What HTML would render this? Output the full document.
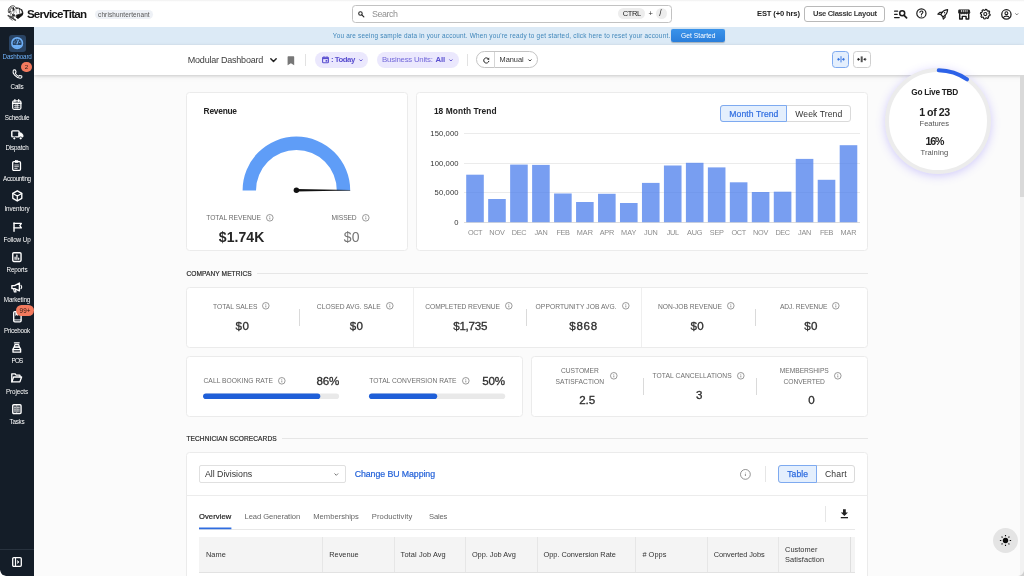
<!DOCTYPE html>
<html><head><meta charset="utf-8">
<style>
*{box-sizing:border-box;margin:0;padding:0}
html,body{width:1024px;height:576px;overflow:hidden;background:#fbfbfb;font-family:"Liberation Sans",sans-serif;color:#222}
.a{position:absolute}
.t{position:absolute;white-space:nowrap;line-height:1}
#root{position:absolute;left:0;top:0;width:1024px;height:576px;overflow:hidden;will-change:transform}
svg{position:absolute;overflow:visible}
</style></head><body><div id="root">
<div class="a" style="left:0px;top:0px;width:1024px;height:27px;background:#fff;"></div>
<div class="a" style="left:0px;top:0px;width:1024px;height:2px;background:linear-gradient(#efefef,#fbfbfb 60%,#fff);"></div>
<div class="a" style="left:34px;top:27px;width:990px;height:18px;background:#dceaf6;"></div>
<div class="a" style="left:34px;top:45px;width:990px;height:29.5px;background:#fff;box-shadow:0 1px 3px rgba(0,0,0,.16),0 2px 6px rgba(0,0,0,.06)"></div>
<div class="a" style="left:1020px;top:75px;width:4px;height:501px;background:#f2f2f2;"></div>
<div class="a" style="left:1020px;top:75px;width:4px;height:122px;background:#d9d9d9;"></div>
<svg style="left:4px;top:2px" width="24" height="22" viewBox="0 0 24 22" fill="none" stroke="#111" stroke-linecap="round" stroke-linejoin="round">
<path d="M4.5 10.4C3.7 7.4 5.2 4.6 8 3.9C9.6 3.5 10.8 4.1 11.4 5.2" stroke-width="1" opacity=".7"/>
<path d="M5.2 9.6C6 8.6 6.2 7.2 7.2 6.4M6.2 11.6C7 10 8.4 9.6 8.8 8.4M6.8 5.2C8 5.6 8.6 6.4 8.8 7.4M4.8 8C5.6 7.6 5.8 6.2 6.6 5.6" stroke-width=".9" opacity=".6"/>
<path d="M5.4 10.4L6.4 9.2" stroke-width="1.3" opacity=".8"/>
<path d="M9.2 5.8L10 7.9" stroke-width="1.5" opacity=".95"/>
<path d="M9.6 8.4C10.4 9.6 10.2 11 9 12M7.4 11.4L8.6 12.4" stroke-width=".8" opacity=".6"/>
<path d="M11.8 5.7C13.4 5.5 15.4 6.1 17.2 7.5" stroke-width=".9" opacity=".75"/>
<path d="M12.2 6.2L13.4 6.6M15 6.4L16.2 7.6" stroke-width="1.1" opacity=".8"/>
<path d="M17.6 7.8C18.3 9 18.7 10.4 18.6 11.8" stroke-width="1.4" opacity=".9"/>
<path d="M15.3 7.4L15.7 11.2" stroke-width=".9" opacity=".6"/>
<path d="M12.2 6.4C11.6 8 11.8 9.6 12.6 11" stroke-width=".7" opacity=".45"/>
<path d="M12.4 13.2L18.6 11.4L18.4 13.2L14 16.6L12.4 15.4Z" fill="#111" stroke-width=".8"/>
<path d="M8.4 12.6H10.6V14.2H8.4Z" fill="#111" stroke-width=".7" opacity=".9"/>
<path d="M6.6 12.4C7 13.6 7 14.4 6.6 15.2" stroke-width=".7" opacity=".55"/>
<path d="M4.2 13.6L11.4 18.2" stroke-width="1.5" opacity=".8"/>
<path d="M5.2 15.8L8.2 18.2M7.4 14.4L9.6 15.6" stroke-width="1" opacity=".6"/>
</svg>
<div class="t" style="left:26.90px;top:8px;font-size:11.6px;font-weight:700;color:#151515;letter-spacing:-0.787px;">ServiceTitan</div>
<div class="a" style="left:95px;top:9.8px;width:58px;height:9.3px;background:#eef1f6;border-radius:5px"></div>
<div class="t" style="left:98.10px;top:12px;font-size:6.4px;font-weight:400;color:#555;letter-spacing:0.136px;">chrishuntertenant</div>
<div class="a" style="left:352px;top:5px;width:320px;height:17.6px;background:#fff;border:1px solid #c2c2c2;border-radius:3.5px"></div>
<svg style="left:357.8px;top:10.6px" width="6.4" height="6.4" viewBox="0 0 12 12"><circle cx="4.6" cy="4.6" r="3.3" fill="none" stroke="#222" stroke-width="2"/><path d="M7.2 7.2L11 11" stroke="#222" stroke-width="2.2" stroke-linecap="round"/></svg>
<div class="t" style="left:371.90px;top:10px;font-size:8.9px;font-weight:400;color:#8f8f8f;letter-spacing:-0.404px;">Search</div>
<div class="a" style="left:618.3px;top:7.8px;width:26.6px;height:11.7px;background:#ededed;border-radius:6px"></div>
<div class="t" style="left:622.70px;top:10px;font-size:7.5px;font-weight:400;color:#222;letter-spacing:-0.373px;">CTRL</div>
<div class="t" style="left:648.60px;top:10px;font-size:7.5px;font-weight:400;color:#333;letter-spacing:-0.191px;">+</div>
<div class="a" style="left:655.7px;top:7.8px;width:10.9px;height:11.7px;background:#ededed;border-radius:6px"></div>
<div class="t" style="left:659.30px;top:9px;font-size:8.6px;font-weight:400;color:#222;letter-spacing:1.309px;">/</div>
<div class="t" style="left:757.00px;top:10px;font-size:7.6px;font-weight:700;color:#222;letter-spacing:-0.144px;">EST (+0 hrs)</div>
<div class="a" style="left:804.2px;top:5.9px;width:80.8px;height:15.7px;background:#fff;border:1px solid #b9b9b9;border-radius:3px"></div>
<div class="t" style="left:813.00px;top:10px;font-size:7.6px;font-weight:700;color:#3a3a3a;letter-spacing:-0.330px;">Use Classic Layout</div>
<svg style="left:893.5px;top:9.5px" width="13.5" height="8.6" viewBox="0 0 13.5 8.6" fill="none" stroke="#1c1c1c" stroke-width="1.35" stroke-linecap="round" stroke-linejoin="round">
<path d="M0.6 1.2H3.6M0.6 4.3H3.2M0.6 7.6H5.2" stroke-width="1.3"/><circle cx="8.2" cy="3.3" r="2.5" stroke-width="1.5"/><path d="M10.1 5.3L12.6 7.9" stroke-width="1.7"/></svg>
<svg style="left:916.2px;top:8.4px" width="10.8" height="10.8" viewBox="0 0 10.8 10.8" fill="none" stroke="#1c1c1c" stroke-width="1.35" stroke-linecap="round" stroke-linejoin="round">
<circle cx="5.4" cy="5.4" r="4.6" stroke-width="1.2"/><path d="M3.9 4.3C3.9 2.5 6.9 2.5 6.9 4.3C6.9 5.3 5.4 5.4 5.4 6.6" stroke-width="1.1"/><circle cx="5.4" cy="8.1" r=".65" fill="#1c1c1c" stroke="none"/></svg>
<svg style="left:937px;top:9px" width="11.4" height="10.8" viewBox="0 0 11.4 10.8" fill="none" stroke="#1c1c1c" stroke-width="1.35" stroke-linecap="round" stroke-linejoin="round">
<path d="M10.6 0.7C7.4 0.9 5 2.9 3.8 5.6L5.9 7.7C8.6 6.5 10.4 4 10.6 0.7Z" stroke-width="1.25"/><path d="M3.9 5.5L0.8 5.1L3 3.2L5 3.4M5.9 7.6L6.3 10.2L8.2 8.2L8 6.1" stroke-width="1.15"/><circle cx="7.6" cy="3.8" r=".7" fill="#1c1c1c" stroke="none"/></svg>
<svg style="left:958.3px;top:8.7px" width="12.4" height="10.8" viewBox="0 0 12.4 10.8" fill="none" stroke="#1c1c1c" stroke-width="1.35" stroke-linecap="round" stroke-linejoin="round">
<path d="M1.2 0.9H11.2L11.8 3.4C11.8 5.3 9.4 5.3 9.4 3.6C9.4 5.3 7.2 5.3 7.2 3.6C7.2 5.3 5 5.3 5 3.6C5 5.3 2.8 5.3 2.8 3.6C2.8 5.3 0.6 5.3 0.6 3.4Z" fill="#1c1c1c" stroke-width=".9"/>
<path d="M3.4 1.4V2.8M5.3 1.4V2.8M7.2 1.4V2.8M9.1 1.4V2.8" stroke="#fff" stroke-width=".8"/>
<path d="M1.7 5.6V10H4.3V7.4H8.1V10H10.7V5.6" stroke-width="1.45"/></svg>
<svg style="left:980.2px;top:8.6px" width="10.6" height="10.2" viewBox="0 0 10.6 10.2" fill="none" stroke="#1c1c1c" stroke-width="1.35" stroke-linecap="round" stroke-linejoin="round">
<path d="M10.19 5.42L9.94 6.67L8.80 6.83L8.23 7.67L8.53 8.79L7.47 9.49L6.55 8.79L5.56 8.99L4.98 9.99L3.73 9.74L3.57 8.60L2.73 8.03L1.61 8.33L0.91 7.27L1.61 6.35L1.41 5.36L0.41 4.78L0.66 3.53L1.80 3.37L2.37 2.53L2.07 1.41L3.13 0.71L4.05 1.41L5.04 1.21L5.62 0.21L6.87 0.46L7.03 1.60L7.87 2.17L8.99 1.87L9.69 2.93L8.99 3.85L9.19 4.84Z" stroke-width="1.15"/><circle cx="5.3" cy="5.1" r="1.55" stroke-width="1.1"/></svg>
<svg style="left:1001.4px;top:8.6px" width="10.8" height="10.8" viewBox="0 0 10.8 10.8" fill="none" stroke="#1c1c1c" stroke-width="1.35" stroke-linecap="round" stroke-linejoin="round">
<circle cx="5.4" cy="5.4" r="4.65" stroke-width="1.25"/><circle cx="5.4" cy="4.2" r="1.45" stroke-width="1.1"/><path d="M2.4 8.6C3.2 6.6 7.6 6.6 8.4 8.6" stroke-width="1.1"/></svg>
<svg style="left:1015px;top:12.6px" width="3.6" height="2.4" viewBox="0 0 3.6 2.4"><path d="M.4 .4L1.8 1.9L3.2 .4" fill="none" stroke="#555" stroke-width=".8"/></svg>
<div class="t" style="left:332.80px;top:33px;font-size:6.4px;font-weight:400;color:#3f86ba;letter-spacing:0.213px;">You are seeing sample data in your account. When you&#x27;re ready to get started, click here to reset your account.</div>
<div class="a" style="left:671.2px;top:29.1px;width:53.6px;height:12.7px;background:linear-gradient(#3a93ea,#2a7edb);border-radius:2px;box-shadow:0 .5px 1px rgba(0,0,0,.25)"></div>
<div class="t" style="left:681.10px;top:33px;font-size:6.7px;font-weight:400;color:#fff;letter-spacing:0.027px;">Get Started</div>
<div class="a" style="left:0px;top:27px;width:34px;height:549px;background:#141d28;border-bottom-left-radius:6px"></div>
<div class="a" style="left:0px;top:548.5px;width:34px;height:1px;background:#28323e;"></div>
<div class="a" style="left:8.6px;top:34.9px;width:17.2px;height:17px;background:#2a4464;border-radius:3px"></div>
<svg style="left:11.05px;top:37.4px" width="12.3" height="12.3" viewBox="0 0 11.6 11.6"><circle cx="5.8" cy="5.8" r="5" fill="#2a4464" stroke="#6fb0f7" stroke-width="1.5"/><path d="M1.6 7.6A4.6 4.6 0 0 0 10 7.6Z" fill="#6fb0f7"/><path d="M5.6 6.6L7 2.9" stroke="#6fb0f7" stroke-width="1.1" stroke-linecap="round"/><path d="M3.2 3.6l.5.5M8.6 5l-.7.2M3 5.4l.7.2M5.4 2.6l.1.6" stroke="#6fb0f7" stroke-width=".7" stroke-linecap="round"/></svg>
<div class="t" style="left:2.60px;top:54px;font-size:6.3px;font-weight:400;color:#6fb0f7;letter-spacing:-0.201px;">Dashboard</div>
<svg style="left:11.6px;top:69.2px" width="10.6" height="10" viewBox="0 0 10.6 10" fill="none" stroke="#fff" stroke-width="1.25" stroke-linecap="round" stroke-linejoin="round"><path d="M1.2 1.6C.7 2.8 1 4.3 2.6 6.2C4.4 8.2 6.4 9.2 8.2 9.2C9.2 9.2 9.8 8.8 9.9 8.2L9.8 7.1L7.7 6.4L6.6 7.3C5.2 6.8 3.9 5.5 3.3 4.1L4.1 3L3.4 .9L2.3 .8C1.8 .8 1.4 1.1 1.2 1.6Z" stroke-width="1.05"/></svg>
<div class="a" style="left:20.9px;top:61.7px;width:10.8px;height:10.8px;border-radius:6px;background:#f37a5e"></div>
<div class="t" style="left:24.80px;top:64px;font-size:6.2px;font-weight:400;color:#2a1a14;letter-spacing:-0.453px;">2</div>
<div class="t" style="left:10.60px;top:84px;font-size:6.3px;font-weight:400;color:#fff;letter-spacing:-0.240px;">Calls</div>
<svg style="left:12.2px;top:98.7px" width="9.6" height="11" viewBox="0 0 9.6 11" fill="none" stroke="#fff" stroke-width="1.25" stroke-linecap="round" stroke-linejoin="round"><rect x=".7" y="1.8" width="8.2" height="8.5" rx="1.2"/><path d="M2.9 .6V2.6M6.7 .6V2.6" stroke-width="1.3"/><path d="M.7 4.3H8.9" stroke-width="1.6"/><path d="M2.4 6.4H7.2M2.4 8.3H7.2M4 5.4V9.3M5.7 5.4V9.3" stroke-width=".7"/></svg>
<div class="t" style="left:4.80px;top:115px;font-size:6.3px;font-weight:400;color:#fff;letter-spacing:-0.233px;">Schedule</div>
<svg style="left:10.9px;top:129.6px" width="12.6" height="10.6" viewBox="0 0 12.6 10.6" fill="none" stroke="#fff" stroke-width="1.25" stroke-linecap="round" stroke-linejoin="round"><rect x=".8" y=".9" width="7.3" height="6" rx=".9" stroke-width="1.45"/><path d="M8.4 2.9H10.3L11.9 4.9V7H8.4Z" fill="#fff" stroke-width="1"/><circle cx="3.3" cy="8.3" r="1.7" fill="#141d28" stroke="none"/><circle cx="9.7" cy="8.3" r="1.7" fill="#141d28" stroke="none"/><circle cx="3.3" cy="8.3" r="1.15" fill="#fff" stroke="none"/><circle cx="9.7" cy="8.3" r="1.15" fill="#fff" stroke="none"/></svg>
<div class="t" style="left:5.40px;top:145px;font-size:6.3px;font-weight:400;color:#fff;letter-spacing:-0.162px;">Dispatch</div>
<svg style="left:12.4px;top:159.6px" width="9.2" height="11" viewBox="0 0 9.2 11" fill="none" stroke="#fff" stroke-width="1.25" stroke-linecap="round" stroke-linejoin="round"><rect x=".7" y="1.6" width="7.8" height="8.7" rx="1.1" stroke-width="1.3"/><rect x="3" y=".5" width="3.2" height="2" rx=".6" fill="#fff" stroke-width=".6"/><path d="M2.7 5H6.5M2.7 6.7H6.5M2.7 8.4H5.2" stroke-width=".8"/></svg>
<div class="t" style="left:3.10px;top:176px;font-size:6.3px;font-weight:400;color:#fff;letter-spacing:-0.356px;">Accounting</div>
<svg style="left:11.7px;top:190px" width="10.6" height="11.6" viewBox="0 0 10.6 11.6" fill="none" stroke="#fff" stroke-width="1.25" stroke-linecap="round" stroke-linejoin="round"><path d="M5.3 .8L9.8 3.3V8.3L5.3 10.8L.8 8.3V3.3Z" stroke-width="1.35"/><path d="M.9 3.4L5.3 5.9L9.7 3.4M5.3 5.9V10.7" stroke-width="1.2"/></svg>
<div class="t" style="left:4.40px;top:206px;font-size:6.3px;font-weight:400;color:#fff;letter-spacing:-0.078px;">Inventory</div>
<svg style="left:12.9px;top:221.7px" width="9.4" height="10" viewBox="0 0 9.8 10.6" fill="none" stroke="#fff" stroke-width="1.25" stroke-linecap="round" stroke-linejoin="round"><path d="M1 .9V9.9" stroke-width="1.5"/><path d="M1 1.4H8.8L7.2 3.8L8.8 6.2H1" stroke-width="1.35"/></svg>
<div class="t" style="left:3.40px;top:237px;font-size:6.3px;font-weight:400;color:#fff;letter-spacing:-0.089px;">Follow Up</div>
<svg style="left:12.2px;top:251.7px" width="9.8" height="10.2" viewBox="0 0 9.8 10.2" fill="none" stroke="#fff" stroke-width="1.25" stroke-linecap="round" stroke-linejoin="round"><rect x=".75" y=".75" width="8.3" height="8.7" rx="1.1" stroke-width="1.4"/><path d="M3.1 7.3V5.2M4.9 7.3V3M6.7 7.3V6.1" stroke-width="1.2"/></svg>
<div class="t" style="left:6.60px;top:267px;font-size:6.3px;font-weight:400;color:#fff;letter-spacing:-0.180px;">Reports</div>
<svg style="left:11.2px;top:281.8px" width="11.6" height="11" viewBox="0 0 11.6 11" fill="none" stroke="#fff" stroke-width="1.25" stroke-linecap="round" stroke-linejoin="round"><path d="M.9 3.6H3.6L8.4 1V8.9L3.6 6.6H.9Z" stroke-width="1.4"/><path d="M2.6 6.8L3.4 10H5L4.4 7" stroke-width="1.2"/><path d="M10 3.4C10.9 4.2 10.9 5.8 10 6.6" stroke-width="1.1"/></svg>
<div class="t" style="left:3.80px;top:297px;font-size:6.3px;font-weight:400;color:#fff;letter-spacing:-0.140px;">Marketing</div>
<svg style="left:12.6px;top:311.4px" width="8.8" height="11.6" viewBox="0 0 8.8 11.6" fill="none" stroke="#fff" stroke-width="1.25" stroke-linecap="round" stroke-linejoin="round"><rect x=".7" y=".7" width="7.4" height="10.2" rx="1.1" stroke-width="1.35"/><path d="M2.6 .8V4.6L3.8 3.7L5 4.6V.8Z" fill="#fff" stroke-width=".5"/><path d="M.9 8.9H8" stroke-width=".9"/></svg>
<div class="a" style="left:16.1px;top:305.2px;width:17.9px;height:10.7px;border-radius:5.4px;background:#f37a5e"></div>
<div class="t" style="left:19.60px;top:308px;font-size:6.3px;font-weight:400;color:#2a1a14;letter-spacing:0.104px;">99+</div>
<div class="t" style="left:4.00px;top:328px;font-size:6.3px;font-weight:400;color:#fff;letter-spacing:-0.224px;">Pricebook</div>
<svg style="left:12.2px;top:342.4px" width="9.6" height="11" viewBox="0 0 9.6 11" fill="none" stroke="#fff" stroke-width="1.25" stroke-linecap="round" stroke-linejoin="round"><path d="M2.4 .8H7.2M2.9 2.6H6.7L7.3 5H2.3Z" stroke-width="1.2"/><path d="M1 7.2L2.2 5.2H7.4L8.6 7.2V10.2H1Z" stroke-width="1.35"/><path d="M1 7.6H8.6" stroke-width="1.1"/></svg>
<div class="t" style="left:11.60px;top:358px;font-size:6.3px;font-weight:400;color:#fff;letter-spacing:-0.838px;">POS</div>
<svg style="left:11.4px;top:373.2px" width="11.4" height="9.8" viewBox="0 0 11.4 9.8" fill="none" stroke="#fff" stroke-width="1.25" stroke-linecap="round" stroke-linejoin="round"><path d="M.8 8.8V1.2C.8 .9 1 .8 1.2 .8H4L5.2 2.1H8.6C8.9 2.1 9 2.3 9 2.5V3.8" stroke-width="1.35"/><path d="M.9 8.9L2.6 4H10.6L8.9 8.9Z" stroke-width="1.35"/></svg>
<div class="t" style="left:6.00px;top:389px;font-size:6.3px;font-weight:400;color:#fff;letter-spacing:-0.094px;">Projects</div>
<svg style="left:12.1px;top:403.6px" width="9.8" height="10.2" viewBox="0 0 9.8 10.2" fill="none" stroke="#fff" stroke-width="1.25" stroke-linecap="round" stroke-linejoin="round"><rect x=".75" y=".75" width="8.3" height="8.7" rx="1" stroke-width="1.4"/><path d="M2.4 3.2H4M5.4 3.2H7.4M2.4 5.1H4M5.4 5.1H7.4M2.4 7H4M5.4 7H7.4" stroke-width="1"/><path d="M4.7 1V9.2" stroke-width=".5"/></svg>
<div class="t" style="left:9.60px;top:419px;font-size:6.3px;font-weight:400;color:#fff;letter-spacing:-0.262px;">Tasks</div>
<svg style="left:12px;top:557px" width="10" height="10" viewBox="0 0 10 10" fill="none" stroke="#fff" stroke-width="1.25" stroke-linecap="round" stroke-linejoin="round"><rect x=".7" y=".7" width="8.6" height="8.6" rx="1.1" stroke-width="1.3"/><path d="M3.5 .9V9.1" stroke-width="1.2"/><path d="M5.8 3.8L7 5L5.8 6.2Z" fill="#fff" stroke-width=".6"/></svg>
<div class="t" style="left:187.80px;top:56px;font-size:9px;font-weight:400;color:#3d3d3d;letter-spacing:-0.226px;">Modular Dashboard</div>
<svg style="left:270.2px;top:57.8px" width="7" height="4.6" viewBox="0 0 7 4.6"><path d="M.8 .8L3.5 3.6L6.2 .8" fill="none" stroke="#222" stroke-width="1.45" stroke-linecap="round" stroke-linejoin="round"/></svg>
<svg style="left:286.8px;top:55.6px" width="7.8" height="9.4" viewBox="0 0 7.8 9.4"><path d="M.6 .9C.6 .5 .9 .3 1.2 .3H6.6C6.9 .3 7.2 .5 7.2 .9V9.2L3.9 7.3L.6 9.2Z" fill="#777"/></svg>
<div class="a" style="left:305.2px;top:54.2px;width:1px;height:11.4px;background:#e2e2e2;"></div>
<div class="a" style="left:314.8px;top:51.8px;width:53.7px;height:16.3px;background:#ebe8fd;border-radius:8.2px"></div>
<svg style="left:322px;top:56.2px" width="7" height="7.4" viewBox="0 0 7 7.4"><rect x=".6" y="1.2" width="5.8" height="5.6" rx=".9" fill="none" stroke="#5a4fd0" stroke-width="1.1"/><path d="M.6 2.4H6.4" stroke="#5a4fd0" stroke-width="1.5"/><path d="M2 .4V1.6M5 .4V1.6" stroke="#5a4fd0" stroke-width=".9"/><rect x="3.6" y="4" width="1.7" height="1.7" fill="#5a4fd0"/></svg>
<div class="t" style="left:331.00px;top:56px;font-size:7.8px;font-weight:700;color:#5a4fd0;letter-spacing:-0.479px;">: Today</div>
<svg style="left:358.6px;top:58.9px" width="3.8" height="2.6" viewBox="0 0 3.8 2.6"><path d="M.4 .5L1.9 2L3.4 .5" fill="none" stroke="#5a4fd0" stroke-width="1"/></svg>
<div class="a" style="left:376.8px;top:51.8px;width:82.1px;height:16.3px;background:#ebe8fd;border-radius:8.2px"></div>
<div class="t" style="left:382.10px;top:56px;font-size:7.8px;font-weight:400;color:#7368da;letter-spacing:-0.216px;">Business Units:</div>
<div class="t" style="left:435.40px;top:56px;font-size:7.8px;font-weight:700;color:#5a4fd0;letter-spacing:-0.056px;">All</div>
<svg style="left:449px;top:58.9px" width="3.8" height="2.6" viewBox="0 0 3.8 2.6"><path d="M.4 .5L1.9 2L3.4 .5" fill="none" stroke="#5a4fd0" stroke-width="1"/></svg>
<div class="a" style="left:467px;top:54.2px;width:1px;height:11.4px;background:#e2e2e2;"></div>
<div class="a" style="left:476px;top:51.4px;width:61.6px;height:16.8px;background:#fff;border:1px solid #c4c4c4;border-radius:8.4px"></div>
<div class="a" style="left:494.2px;top:52px;width:1px;height:15.6px;background:#d6d6d6;"></div>
<svg style="left:483.4px;top:56.8px" width="6.6" height="6.6" viewBox="0 0 6.6 6.6"><path d="M5.6 2.2A2.6 2.6 0 1 0 5.9 3.9" fill="none" stroke="#222" stroke-width="1"/><path d="M6.2 .6V2.7H4.1Z" fill="#222"/></svg>
<div class="t" style="left:499.50px;top:56px;font-size:7.4px;font-weight:400;color:#333;letter-spacing:-0.008px;">Manual</div>
<svg style="left:527.7px;top:58.9px" width="3.8" height="2.6" viewBox="0 0 3.8 2.6"><path d="M.4 .5L1.9 2L3.4 .5" fill="none" stroke="#333" stroke-width="1"/></svg>
<div class="a" style="left:832.2px;top:51.2px;width:16.7px;height:16.8px;background:#e4effd;border:1.3px solid #7eaaf0;border-radius:3.5px"></div>
<div class="a" style="left:853.3px;top:51.2px;width:17.6px;height:16.8px;background:#fff;border:1px solid #cfcfcf;border-radius:3.5px"></div>
<svg style="left:836.5px;top:56.2px" width="8" height="6.6" viewBox="0 0 8 6.6"><path d="M4 .2V6.4" stroke="#3372e0" stroke-width=".9"/><path d="M0 3.3H1.2M6.8 3.3H8" stroke="#3372e0" stroke-width=".7"/><path d="M.9 1.7L3.2 3.3L.9 4.9ZM7.1 1.7L4.8 3.3L7.1 4.9Z" fill="#3372e0"/></svg>
<svg style="left:857.1px;top:56.2px" width="9.4" height="6.6" viewBox="0 0 9.4 6.6"><rect x="3.7" y=".4" width="2" height="5.8" fill="#555"/><path d="M.9 1.7L3.2 3.3L.9 4.9ZM8.5 1.7L6.2 3.3L8.5 4.9Z" fill="#222"/><path d="M0 3.3H1.2M8.2 3.3H9.4" stroke="#222" stroke-width=".8"/></svg>
<div class="a" style="left:185.6px;top:91.8px;width:222px;height:159.2px;background:#fff;border:1px solid #ebebeb;border-radius:3.5px"></div>
<div class="t" style="left:203.60px;top:107px;font-size:8.4px;font-weight:700;color:#222;letter-spacing:-0.246px;">Revenue</div>
<svg style="left:240px;top:134px" width="114" height="60" viewBox="240 134 114 60">
<path d="M242.6 190.4A53.8 53.8 0 0 1 350.2 190.4H336.8A40.4 40.4 0 0 0 256 190.4Z" fill="#5f9df7"/>
<path d="M296.4 189L350.2 190V190.6L296.4 191.6Z" fill="#111"/><circle cx="296.4" cy="190.3" r="2.75" fill="#111"/></svg>
<div class="t" style="left:206.20px;top:215px;font-size:6.7px;font-weight:400;color:#6a6a6a;letter-spacing:-0.006px;">TOTAL REVENUE</div>
<svg style="left:266.00px;top:214.00px" width="7.6" height="7.6" viewBox="0 0 7.6 7.6"><circle cx="3.8" cy="3.8" r="3.3" fill="none" stroke="#707070" stroke-width=".7"/><path d="M3.8 3.5V5.4" stroke="#707070" stroke-width=".75"/><circle cx="3.8" cy="2.3" r=".45" fill="#707070"/></svg>
<div class="t" style="left:218.80px;top:230px;font-size:14px;font-weight:700;color:#262626;letter-spacing:0.074px;">$1.74K</div>
<div class="t" style="left:331.60px;top:215px;font-size:6.7px;font-weight:400;color:#6a6a6a;letter-spacing:-0.107px;">MISSED</div>
<svg style="left:362.20px;top:214.00px" width="7.6" height="7.6" viewBox="0 0 7.6 7.6"><circle cx="3.8" cy="3.8" r="3.3" fill="none" stroke="#707070" stroke-width=".7"/><path d="M3.8 3.5V5.4" stroke="#707070" stroke-width=".75"/><circle cx="3.8" cy="2.3" r=".45" fill="#707070"/></svg>
<div class="t" style="left:343.80px;top:230px;font-size:14px;font-weight:400;color:#757575;letter-spacing:0.211px;">$0</div>
<div class="a" style="left:416.2px;top:91.8px;width:452px;height:159.2px;background:#fff;border:1px solid #ebebeb;border-radius:3.5px"></div>
<div class="t" style="left:433.90px;top:107px;font-size:8.4px;font-weight:700;color:#222;letter-spacing:0.065px;">18 Month Trend</div>
<div class="a" style="left:720px;top:105.2px;width:130.6px;height:16.6px;background:#fff;border:1px solid #dadada;border-radius:3px"></div>
<div class="a" style="left:720px;top:105.2px;width:67.4px;height:16.6px;background:#e4effd;border:1.2px solid #7eaaf0;border-radius:3px 0 0 3px"></div>
<div class="t" style="left:729.30px;top:110px;font-size:8.6px;font-weight:400;color:#2f6de0;letter-spacing:0.086px;-webkit-text-stroke:.2px #2f6de0">Month Trend</div>
<div class="t" style="left:795.30px;top:110px;font-size:8.6px;font-weight:400;color:#333;letter-spacing:0.081px;">Week Trend</div>
<div class="a" style="left:464px;top:133.4px;width:396px;height:1px;background:#ebebeb;"></div>
<div class="a" style="left:464px;top:162.8px;width:396px;height:1px;background:#ebebeb;"></div>
<div class="a" style="left:464px;top:192.2px;width:396px;height:1px;background:#ebebeb;"></div>
<div class="a" style="left:464px;top:221.7px;width:396px;height:1px;background:#dcdcdc;"></div>
<div class="t" style="left:430.30px;top:130px;font-size:7.6px;font-weight:400;color:#333;letter-spacing:0.121px;">150,000</div>
<div class="t" style="left:430.30px;top:160px;font-size:7.6px;font-weight:400;color:#333;letter-spacing:0.121px;">100,000</div>
<div class="t" style="left:434.60px;top:189px;font-size:7.6px;font-weight:400;color:#333;letter-spacing:0.128px;">50,000</div>
<div class="t" style="left:454.20px;top:219px;font-size:7.6px;font-weight:400;color:#333;letter-spacing:0.166px;">0</div>
<div class="t" style="left:467.90px;top:229px;font-size:7.3px;font-weight:400;color:#8c8c8c;letter-spacing:-0.402px;">OCT</div>
<div class="t" style="left:489.37px;top:229px;font-size:7.3px;font-weight:400;color:#8c8c8c;letter-spacing:-0.204px;">NOV</div>
<div class="t" style="left:511.74px;top:229px;font-size:7.3px;font-weight:400;color:#8c8c8c;letter-spacing:-0.335px;">DEC</div>
<div class="t" style="left:534.41px;top:229px;font-size:7.3px;font-weight:400;color:#8c8c8c;letter-spacing:-0.266px;">JAN</div>
<div class="t" style="left:556.38px;top:229px;font-size:7.3px;font-weight:400;color:#8c8c8c;letter-spacing:-0.401px;">FEB</div>
<div class="t" style="left:576.85px;top:229px;font-size:7.3px;font-weight:400;color:#8c8c8c;letter-spacing:-0.073px;">MAR</div>
<div class="t" style="left:599.72px;top:229px;font-size:7.3px;font-weight:400;color:#8c8c8c;letter-spacing:-0.272px;">APR</div>
<div class="t" style="left:621.09px;top:229px;font-size:7.3px;font-weight:400;color:#8c8c8c;letter-spacing:0.040px;">MAY</div>
<div class="t" style="left:644.06px;top:229px;font-size:7.3px;font-weight:400;color:#8c8c8c;letter-spacing:-0.268px;">JUN</div>
<div class="t" style="left:666.83px;top:229px;font-size:7.3px;font-weight:400;color:#8c8c8c;letter-spacing:-0.395px;">JUL</div>
<div class="t" style="left:687.10px;top:229px;font-size:7.3px;font-weight:400;color:#8c8c8c;letter-spacing:-0.204px;">AUG</div>
<div class="t" style="left:709.87px;top:229px;font-size:7.3px;font-weight:400;color:#8c8c8c;letter-spacing:-0.336px;">SEP</div>
<div class="t" style="left:731.54px;top:229px;font-size:7.3px;font-weight:400;color:#8c8c8c;letter-spacing:-0.402px;">OCT</div>
<div class="t" style="left:753.01px;top:229px;font-size:7.3px;font-weight:400;color:#8c8c8c;letter-spacing:-0.204px;">NOV</div>
<div class="t" style="left:775.38px;top:229px;font-size:7.3px;font-weight:400;color:#8c8c8c;letter-spacing:-0.335px;">DEC</div>
<div class="t" style="left:798.05px;top:229px;font-size:7.3px;font-weight:400;color:#8c8c8c;letter-spacing:-0.266px;">JAN</div>
<div class="t" style="left:820.02px;top:229px;font-size:7.3px;font-weight:400;color:#8c8c8c;letter-spacing:-0.401px;">FEB</div>
<div class="t" style="left:840.49px;top:229px;font-size:7.3px;font-weight:400;color:#8c8c8c;letter-spacing:-0.073px;">MAR</div>
<svg style="left:0;top:0" width="1024" height="576" viewBox="0 0 1024 576" fill="rgba(78,128,236,.76)"><rect x="466.20" y="174.70" width="17.6" height="47.50"/><rect x="488.17" y="199.00" width="17.6" height="23.20"/><rect x="510.14" y="164.60" width="17.6" height="57.60"/><rect x="532.11" y="164.90" width="17.6" height="57.30"/><rect x="554.08" y="193.50" width="17.6" height="28.70"/><rect x="576.05" y="202.00" width="17.6" height="20.20"/><rect x="598.02" y="193.80" width="17.6" height="28.40"/><rect x="619.99" y="203.00" width="17.6" height="19.20"/><rect x="641.96" y="182.90" width="17.6" height="39.30"/><rect x="663.93" y="165.50" width="17.6" height="56.70"/><rect x="685.90" y="162.80" width="17.6" height="59.40"/><rect x="707.87" y="167.40" width="17.6" height="54.80"/><rect x="729.84" y="182.30" width="17.6" height="39.90"/><rect x="751.81" y="192.00" width="17.6" height="30.20"/><rect x="773.78" y="191.70" width="17.6" height="30.50"/><rect x="795.75" y="158.90" width="17.6" height="63.30"/><rect x="817.72" y="179.80" width="17.6" height="42.40"/><rect x="839.69" y="145.20" width="17.6" height="77.00"/></svg>
<div class="t" style="left:186.40px;top:271px;font-size:6.6px;font-weight:400;color:#2b2b2b;letter-spacing:0.078px;-webkit-text-stroke:.2px #2b2b2b">COMPANY METRICS</div>
<div class="a" style="left:256.7px;top:273.2px;width:611.3px;height:1px;background:#e6e6e6;"></div>
<div class="a" style="left:185.6px;top:287px;width:682.6px;height:61px;background:#fff;border:1px solid #ebebeb;border-radius:3.5px"></div>
<div class="a" style="left:413px;top:288px;width:1px;height:59px;background:#efefef;"></div>
<div class="a" style="left:640.6px;top:288px;width:1px;height:59px;background:#efefef;"></div>
<div class="a" style="left:299.3px;top:308.6px;width:1px;height:17px;background:#dadada;"></div>
<div class="a" style="left:526.3px;top:308.6px;width:1px;height:17px;background:#dadada;"></div>
<div class="a" style="left:754.6px;top:308.6px;width:1px;height:17px;background:#dadada;"></div>
<div class="t" style="left:212.90px;top:304px;font-size:6.7px;font-weight:400;color:#6e6e6e;letter-spacing:0.036px;">TOTAL SALES</div>
<svg style="left:262.20px;top:302.40px" width="7.6" height="7.6" viewBox="0 0 7.6 7.6"><circle cx="3.8" cy="3.8" r="3.3" fill="none" stroke="#707070" stroke-width=".7"/><path d="M3.8 3.5V5.4" stroke="#707070" stroke-width=".75"/><circle cx="3.8" cy="2.3" r=".45" fill="#707070"/></svg>
<div class="t" style="left:235.60px;top:320px;font-size:11.6px;font-weight:400;color:#2e2e2e;letter-spacing:0.347px;-webkit-text-stroke:.3px #2e2e2e">$0</div>
<div class="t" style="left:316.80px;top:304px;font-size:6.7px;font-weight:400;color:#6e6e6e;letter-spacing:0.035px;">CLOSED AVG. SALE</div>
<svg style="left:386.00px;top:302.40px" width="7.6" height="7.6" viewBox="0 0 7.6 7.6"><circle cx="3.8" cy="3.8" r="3.3" fill="none" stroke="#707070" stroke-width=".7"/><path d="M3.8 3.5V5.4" stroke="#707070" stroke-width=".75"/><circle cx="3.8" cy="2.3" r=".45" fill="#707070"/></svg>
<div class="t" style="left:349.70px;top:320px;font-size:11.6px;font-weight:400;color:#2e2e2e;letter-spacing:0.347px;-webkit-text-stroke:.3px #2e2e2e">$0</div>
<div class="t" style="left:425.30px;top:304px;font-size:6.7px;font-weight:400;color:#6e6e6e;letter-spacing:-0.065px;">COMPLETED REVENUE</div>
<svg style="left:504.90px;top:302.40px" width="7.6" height="7.6" viewBox="0 0 7.6 7.6"><circle cx="3.8" cy="3.8" r="3.3" fill="none" stroke="#707070" stroke-width=".7"/><path d="M3.8 3.5V5.4" stroke="#707070" stroke-width=".75"/><circle cx="3.8" cy="2.3" r=".45" fill="#707070"/></svg>
<div class="t" style="left:453.20px;top:320px;font-size:11.6px;font-weight:400;color:#2e2e2e;letter-spacing:-0.245px;-webkit-text-stroke:.3px #2e2e2e">$1,735</div>
<div class="t" style="left:535.60px;top:304px;font-size:6.7px;font-weight:400;color:#6e6e6e;letter-spacing:0.060px;">OPPORTUNITY JOB AVG.</div>
<svg style="left:621.60px;top:302.40px" width="7.6" height="7.6" viewBox="0 0 7.6 7.6"><circle cx="3.8" cy="3.8" r="3.3" fill="none" stroke="#707070" stroke-width=".7"/><path d="M3.8 3.5V5.4" stroke="#707070" stroke-width=".75"/><circle cx="3.8" cy="2.3" r=".45" fill="#707070"/></svg>
<div class="t" style="left:569.30px;top:320px;font-size:11.6px;font-weight:400;color:#2e2e2e;letter-spacing:0.701px;-webkit-text-stroke:.3px #2e2e2e">$868</div>
<div class="t" style="left:658.00px;top:304px;font-size:6.7px;font-weight:400;color:#6e6e6e;letter-spacing:-0.020px;">NON-JOB REVENUE</div>
<svg style="left:726.90px;top:302.40px" width="7.6" height="7.6" viewBox="0 0 7.6 7.6"><circle cx="3.8" cy="3.8" r="3.3" fill="none" stroke="#707070" stroke-width=".7"/><path d="M3.8 3.5V5.4" stroke="#707070" stroke-width=".75"/><circle cx="3.8" cy="2.3" r=".45" fill="#707070"/></svg>
<div class="t" style="left:690.50px;top:320px;font-size:11.6px;font-weight:400;color:#2e2e2e;letter-spacing:0.347px;-webkit-text-stroke:.3px #2e2e2e">$0</div>
<div class="t" style="left:780.00px;top:304px;font-size:6.7px;font-weight:400;color:#6e6e6e;letter-spacing:-0.107px;">ADJ. REVENUE</div>
<svg style="left:832.20px;top:302.40px" width="7.6" height="7.6" viewBox="0 0 7.6 7.6"><circle cx="3.8" cy="3.8" r="3.3" fill="none" stroke="#707070" stroke-width=".7"/><path d="M3.8 3.5V5.4" stroke="#707070" stroke-width=".75"/><circle cx="3.8" cy="2.3" r=".45" fill="#707070"/></svg>
<div class="t" style="left:804.20px;top:320px;font-size:11.6px;font-weight:400;color:#2e2e2e;letter-spacing:0.347px;-webkit-text-stroke:.3px #2e2e2e">$0</div>
<div class="a" style="left:185.6px;top:356px;width:337.2px;height:61px;background:#fff;border:1px solid #ebebeb;border-radius:3.5px"></div>
<div class="t" style="left:203.50px;top:378px;font-size:6.7px;font-weight:400;color:#6e6e6e;letter-spacing:0.044px;">CALL BOOKING RATE</div>
<svg style="left:278.30px;top:377.20px" width="7.6" height="7.6" viewBox="0 0 7.6 7.6"><circle cx="3.8" cy="3.8" r="3.3" fill="none" stroke="#707070" stroke-width=".7"/><path d="M3.8 3.5V5.4" stroke="#707070" stroke-width=".75"/><circle cx="3.8" cy="2.3" r=".45" fill="#707070"/></svg>
<div class="t" style="left:316.50px;top:375px;font-size:11.6px;font-weight:400;color:#2e2e2e;letter-spacing:-0.240px;-webkit-text-stroke:.3px #2e2e2e">86%</div>
<div class="t" style="left:369.30px;top:378px;font-size:6.7px;font-weight:400;color:#6e6e6e;letter-spacing:0.028px;">TOTAL CONVERSION RATE</div>
<svg style="left:461.50px;top:377.20px" width="7.6" height="7.6" viewBox="0 0 7.6 7.6"><circle cx="3.8" cy="3.8" r="3.3" fill="none" stroke="#707070" stroke-width=".7"/><path d="M3.8 3.5V5.4" stroke="#707070" stroke-width=".75"/><circle cx="3.8" cy="2.3" r=".45" fill="#707070"/></svg>
<div class="t" style="left:482.30px;top:375px;font-size:11.6px;font-weight:400;color:#2e2e2e;letter-spacing:-0.173px;-webkit-text-stroke:.3px #2e2e2e">50%</div>
<svg style="left:0;top:0" width="1024" height="576"><rect x="203.1" y="393.4" width="136" height="5.6" rx="2.8" fill="#e9e9e9"/><rect x="203.1" y="393.4" width="117.2" height="5.6" rx="2.8" fill="#1f5fd8"/><rect x="369" y="393.4" width="136.2" height="5.6" rx="2.8" fill="#e9e9e9"/><rect x="369" y="393.4" width="68.2" height="5.6" rx="2.8" fill="#1f5fd8"/></svg>
<div class="a" style="left:531.4px;top:356px;width:336.8px;height:61px;background:#fff;border:1px solid #ebebeb;border-radius:3.5px"></div>
<div class="t" style="left:561.00px;top:368px;font-size:6.7px;font-weight:400;color:#6e6e6e;letter-spacing:-0.045px;">CUSTOMER</div>
<div class="t" style="left:555.60px;top:379px;font-size:6.7px;font-weight:400;color:#6e6e6e;letter-spacing:0.066px;">SATISFACTION</div>
<svg style="left:609.50px;top:372.10px" width="7.6" height="7.6" viewBox="0 0 7.6 7.6"><circle cx="3.8" cy="3.8" r="3.3" fill="none" stroke="#707070" stroke-width=".7"/><path d="M3.8 3.5V5.4" stroke="#707070" stroke-width=".75"/><circle cx="3.8" cy="2.3" r=".45" fill="#707070"/></svg>
<div class="t" style="left:579.20px;top:394px;font-size:11.6px;font-weight:400;color:#2e2e2e;letter-spacing:-0.108px;-webkit-text-stroke:.3px #2e2e2e">2.5</div>
<div class="a" style="left:643.2px;top:378.2px;width:1px;height:16.8px;background:#dadada;"></div>
<div class="t" style="left:652.50px;top:373px;font-size:6.7px;font-weight:400;color:#6e6e6e;letter-spacing:0.079px;">TOTAL CANCELLATIONS</div>
<svg style="left:737.00px;top:372.00px" width="7.6" height="7.6" viewBox="0 0 7.6 7.6"><circle cx="3.8" cy="3.8" r="3.3" fill="none" stroke="#707070" stroke-width=".7"/><path d="M3.8 3.5V5.4" stroke="#707070" stroke-width=".75"/><circle cx="3.8" cy="2.3" r=".45" fill="#707070"/></svg>
<div class="t" style="left:696.00px;top:389px;font-size:11.6px;font-weight:400;color:#2e2e2e;letter-spacing:0.347px;-webkit-text-stroke:.3px #2e2e2e">3</div>
<div class="a" style="left:755.8px;top:378.2px;width:1px;height:16.8px;background:#dadada;"></div>
<div class="t" style="left:779.70px;top:368px;font-size:6.7px;font-weight:400;color:#6e6e6e;letter-spacing:-0.029px;">MEMBERSHIPS</div>
<div class="t" style="left:783.60px;top:379px;font-size:6.7px;font-weight:400;color:#6e6e6e;letter-spacing:-0.075px;">CONVERTED</div>
<svg style="left:834.00px;top:372.10px" width="7.6" height="7.6" viewBox="0 0 7.6 7.6"><circle cx="3.8" cy="3.8" r="3.3" fill="none" stroke="#707070" stroke-width=".7"/><path d="M3.8 3.5V5.4" stroke="#707070" stroke-width=".75"/><circle cx="3.8" cy="2.3" r=".45" fill="#707070"/></svg>
<div class="t" style="left:808.20px;top:394px;font-size:11.6px;font-weight:400;color:#2e2e2e;letter-spacing:0.547px;-webkit-text-stroke:.3px #2e2e2e">0</div>
<div class="t" style="left:186.40px;top:436px;font-size:6.6px;font-weight:400;color:#2b2b2b;letter-spacing:0.082px;-webkit-text-stroke:.2px #2b2b2b">TECHNICIAN SCORECARDS</div>
<div class="a" style="left:282px;top:438.2px;width:586px;height:1px;background:#e6e6e6;"></div>
<div class="a" style="left:185.6px;top:452px;width:682.6px;height:140px;background:#fff;border:1px solid #ebebeb;border-radius:3.5px"></div>
<div class="a" style="left:199px;top:465px;width:146.8px;height:17.6px;background:#fff;border:1px solid #e0e0e0;border-radius:2px"></div>
<div class="t" style="left:204.90px;top:470px;font-size:8.8px;font-weight:400;color:#333;letter-spacing:-0.009px;">All Divisions</div>
<svg style="left:333.8px;top:472.8px" width="4.6" height="3" viewBox="0 0 4.6 3"><path d="M.5 .5L2.3 2.3L4.1 .5" fill="none" stroke="#555" stroke-width=".8"/></svg>
<div class="t" style="left:354.70px;top:470px;font-size:8.8px;font-weight:400;color:#2563d9;letter-spacing:-0.081px;-webkit-text-stroke:.2px #2563d9">Change BU Mapping</div>
<svg style="left:739.90px;top:468.80px" width="10.8" height="10.8" viewBox="0 0 10.8 10.8"><circle cx="5.4" cy="5.4" r="4.9" fill="none" stroke="#666" stroke-width=".7"/><path d="M5.4 5.1000000000000005V7.0" stroke="#666" stroke-width=".75"/><circle cx="5.4" cy="3.9000000000000004" r=".45" fill="#666"/></svg>
<div class="a" style="left:765.4px;top:466.4px;width:1px;height:15.4px;background:#e6e6e6;"></div>
<div class="a" style="left:778px;top:465px;width:76.6px;height:18px;background:#fff;border:1px solid #dadada;border-radius:3px"></div>
<div class="a" style="left:778px;top:465px;width:38.8px;height:18px;background:#e4effd;border:1.2px solid #7eaaf0;border-radius:3px 0 0 3px"></div>
<div class="t" style="left:787.20px;top:470px;font-size:8.6px;font-weight:400;color:#2f6de0;letter-spacing:0.091px;-webkit-text-stroke:.25px #2f6de0">Table</div>
<div class="t" style="left:825.00px;top:470px;font-size:8.6px;font-weight:400;color:#333;letter-spacing:0.157px;">Chart</div>
<div class="a" style="left:186.2px;top:495.2px;width:681.4px;height:1px;background:#ececec;"></div>
<div class="t" style="left:199.00px;top:513px;font-size:7.6px;font-weight:400;color:#222;letter-spacing:0.080px;-webkit-text-stroke:.2px #222">Overview</div>
<div class="t" style="left:244.50px;top:513px;font-size:7.6px;font-weight:400;color:#666;letter-spacing:-0.065px;">Lead Generation</div>
<div class="t" style="left:313.30px;top:513px;font-size:7.6px;font-weight:400;color:#666;letter-spacing:0.002px;">Memberships</div>
<div class="t" style="left:371.80px;top:513px;font-size:7.6px;font-weight:400;color:#666;letter-spacing:0.112px;">Productivity</div>
<div class="t" style="left:429.10px;top:513px;font-size:7.6px;font-weight:400;color:#666;letter-spacing:-0.180px;">Sales</div>
<div class="a" style="left:199px;top:528.6px;width:655.6px;height:1px;background:#e8e8e8;"></div>
<svg style="left:0;top:0" width="1024" height="576"><path d="M199 528.3H231.4" stroke="#2f6de0" stroke-width="1.7"/></svg>
<div class="a" style="left:824.8px;top:505.6px;width:1px;height:16.2px;background:#e6e6e6;"></div>
<svg style="left:839.7px;top:509.2px" width="8.8" height="9.6" viewBox="0 0 8.8 9.6"><path d="M3 .3H5.8V3.6H8L4.4 7.1L.8 3.6H3Z" fill="#222"/><rect x=".8" y="8" width="7.2" height="1.3" fill="#222"/></svg>
<div class="a" style="left:199px;top:537.2px;width:655.6px;height:34.8px;background:#f4f4f4;"></div>
<div class="a" style="left:199px;top:572px;width:655.6px;height:1px;background:#e2e2e2;"></div>
<div class="a" style="left:322.4px;top:537.2px;width:1px;height:34.8px;background:#e6e6e6;"></div>
<div class="a" style="left:394px;top:537.2px;width:1px;height:34.8px;background:#e6e6e6;"></div>
<div class="a" style="left:465.3px;top:537.2px;width:1px;height:34.8px;background:#e6e6e6;"></div>
<div class="a" style="left:536.7px;top:537.2px;width:1px;height:34.8px;background:#e6e6e6;"></div>
<div class="a" style="left:635.4px;top:537.2px;width:1px;height:34.8px;background:#e6e6e6;"></div>
<div class="a" style="left:707px;top:537.2px;width:1px;height:34.8px;background:#e6e6e6;"></div>
<div class="a" style="left:778.3px;top:537.2px;width:1px;height:34.8px;background:#e6e6e6;"></div>
<div class="a" style="left:849.6px;top:537.2px;width:1px;height:34.8px;background:#dedede;"></div>
<div class="t" style="left:205.90px;top:551px;font-size:7.4px;font-weight:400;color:#333;letter-spacing:0.095px;">Name</div>
<div class="t" style="left:329.30px;top:551px;font-size:7.4px;font-weight:400;color:#333;letter-spacing:-0.042px;">Revenue</div>
<div class="t" style="left:400.60px;top:551px;font-size:7.4px;font-weight:400;color:#333;letter-spacing:0.106px;">Total Job Avg</div>
<div class="t" style="left:471.90px;top:551px;font-size:7.4px;font-weight:400;color:#333;letter-spacing:-0.029px;">Opp. Job Avg</div>
<div class="t" style="left:543.60px;top:551px;font-size:7.4px;font-weight:400;color:#333;letter-spacing:-0.046px;">Opp. Conversion Rate</div>
<div class="t" style="left:642.40px;top:551px;font-size:7.4px;font-weight:400;color:#333;letter-spacing:0.026px;"># Opps</div>
<div class="t" style="left:713.70px;top:551px;font-size:7.4px;font-weight:400;color:#333;letter-spacing:-0.062px;">Converted Jobs</div>
<div class="t" style="left:785.00px;top:546px;font-size:7.4px;font-weight:400;color:#333;letter-spacing:0.044px;">Customer</div>
<div class="t" style="left:785.00px;top:556px;font-size:7.4px;font-weight:400;color:#333;letter-spacing:0.082px;">Satisfaction</div>
<div class="a" style="left:884.6px;top:68.2px;width:106px;height:106px;border-radius:53px;background:#fff;border:4.4px solid #ececec;box-shadow:0 2px 10px rgba(112,92,255,.30)"></div>
<svg style="left:884.6px;top:68.2px" width="106" height="106" viewBox="0 0 106 106"><path d="M53.7 2.2A50.8 50.8 0 0 1 82.1 11.4" fill="none" stroke="#2d62e8" stroke-width="3.9" stroke-linecap="round"/></svg>
<div class="t" style="left:911.30px;top:88px;font-size:8.3px;font-weight:700;color:#222;letter-spacing:-0.282px;">Go Live TBD</div>
<div class="t" style="left:919.20px;top:107px;font-size:10.6px;font-weight:700;color:#222;letter-spacing:-0.452px;">1 of 23</div>
<div class="t" style="left:919.60px;top:120px;font-size:7.6px;font-weight:400;color:#555;letter-spacing:-0.071px;">Features</div>
<div class="t" style="left:925.60px;top:136px;font-size:10.6px;font-weight:700;color:#222;letter-spacing:-1.201px;">16%</div>
<div class="t" style="left:920.60px;top:149px;font-size:7.6px;font-weight:400;color:#555;letter-spacing:0.055px;">Training</div>
<div class="a" style="left:993.2px;top:528px;width:24.6px;height:24.6px;border-radius:13px;background:#e4e4e4"></div>
<svg style="left:999px;top:533.8px" width="13" height="13" viewBox="0 0 13 13"><circle cx="6.5" cy="6.5" r="2.7" fill="#0a0a0a"/><path d="M6.5 .9V2.3M6.5 10.7V12.1M.9 6.5H2.3M10.7 6.5H12.1M2.6 2.6L3.5 3.5M9.5 9.5L10.4 10.4M2.6 10.4L3.5 9.5M9.5 3.5L10.4 2.6" stroke="#0a0a0a" stroke-width="1.1"/></svg>
<svg style="left:1018px;top:570px" width="6" height="6" viewBox="0 0 6 6"><path d="M6 0V6H0A6 6 0 0 0 6 0Z" fill="#cfcfcf"/></svg>
<svg style="left:0px;top:570px" width="6" height="6" viewBox="0 0 6 6"><path d="M0 0V6H6A6 6 0 0 1 0 0Z" fill="#fff"/></svg>
</div></body></html>
